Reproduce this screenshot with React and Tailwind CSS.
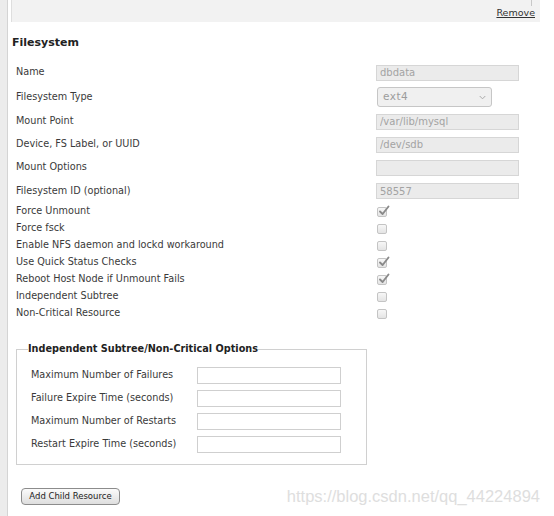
import React from 'react';

// disabled text field, as the cluster form shows them
function RoInput({ value }) {
  return (
    <input
      readOnly
      value={value}
      className="w-[143px] h-[16px] bg-[#ebebeb] border border-[#d6d6d6] px-[3px] text-[10px] leading-[14px] text-[#a3a3a3] outline-none"
    />
  );
}

function Check({ checked }) {
  return (
    <div className="relative w-[10px] h-[10px] rounded-[2px] border border-[#c4c4c4] bg-gradient-to-b from-[#f7f7f7] to-[#e4e4e4]">
      {checked && (
        <svg viewBox="0 0 12 12" className="absolute -top-[3px] left-[0px] w-[12px] h-[12px]">
          <path d="M2 6.5 L4.6 9 L10.5 1.5" fill="none" stroke="#8a8a8a" strokeWidth="1.9" strokeLinecap="round" strokeLinejoin="round" />
        </svg>
      )}
    </div>
  );
}

function Row({ label, h, children }) {
  return (
    <div className={`flex items-center ${h}`}>
      <div className="w-[360px] shrink-0">{label}</div>
      {children}
    </div>
  );
}

const checks = [
  ['Force Unmount', true],
  ['Force fsck', false],
  ['Enable NFS daemon and lockd workaround', false],
  ['Use Quick Status Checks', true],
  ['Reboot Host Node if Unmount Fails', true],
  ['Independent Subtree', false],
  ['Non-Critical Resource', false],
];

const subtreeFields = [
  'Maximum Number of Failures',
  'Failure Expire Time (seconds)',
  'Maximum Number of Restarts',
  'Restart Expire Time (seconds)',
];

export default function App() {
  return (
    <div className="flex w-[554px] min-h-[516px] bg-white font-['DejaVu_Sans',sans-serif] text-[#3a3a3a]">
      <div className="w-[8px] shrink-0 bg-[#ececec] border-r border-[#d4d4d4]" />
      <div className="flex-1 flex flex-col">
        {/* previous resource panel (bottom edge) */}
        <div className="ml-[3px] mr-[14px] h-[22px] bg-[#f2f2f2] border-l border-[#dedede] flex flex-col">
          <div className="h-[6px] mr-[8px] border-r border-[#c8c8c8]" />
          <div className="flex justify-end pr-[5px]">
            <a className="text-[9.5px] leading-[14px] text-[#333] underline cursor-pointer">Remove</a>
          </div>
        </div>

        <div className="h-[39px] pt-[3px] pl-[4px] flex items-center">
          <h2 className="text-[11px] font-bold text-[#222]">Filesystem</h2>
        </div>

        <div className="pl-[8px] text-[9.7px] flex flex-col">
          <Row label="Name" h="h-[23px]">
            <RoInput value="dbdata" />
          </Row>
          <Row label="Filesystem Type" h="h-[26px]">
            <div className="ml-[1px] w-[115px] h-[20px] rounded-[3px] border border-[#c6c6c6] bg-[#f0f0f0] flex items-center justify-between pl-[5px] pr-[5px]">
              <span className="text-[10.5px] tracking-[0.5px] text-[#9c9c9c]">ext4</span>
              <svg viewBox="0 0 8 5" className="w-[7px] h-[5px]">
                <path d="M0.8 0.8 L4 4 L7.2 0.8" fill="none" stroke="#a8a8a8" strokeWidth="1.1" />
              </svg>
            </div>
          </Row>
          <Row label="Mount Point" h="h-[23px]">
            <RoInput value="/var/lib/mysql" />
          </Row>
          <Row label="Device, FS Label, or UUID" h="h-[23px]">
            <RoInput value="/dev/sdb" />
          </Row>
          <Row label="Mount Options" h="h-[23px]">
            <RoInput value="" />
          </Row>
          <Row label="Filesystem ID (optional)" h="h-[24px]">
            <RoInput value="58557" />
          </Row>
          {checks.map(([label, on]) => (
            <Row key={label} label={label} h="h-[17px]">
              <div className="ml-[1px]">
                <Check checked={on} />
              </div>
            </Row>
          ))}

          <fieldset className="mt-[20px] w-[351px] border border-[#d0d0d0] px-[11px] pb-[8px]">
            <legend className="text-[9.7px] leading-[14px] font-bold text-[#222]">
              Independent Subtree/Non-Critical Options
            </legend>
            <div className="mt-[8px] pl-[3px] flex flex-col">
              {subtreeFields.map((f) => (
                <div key={f} className="flex items-center h-[23px]">
                  <div className="w-[166px] shrink-0">{f}</div>
                  <input className="w-[144px] h-[17px] bg-white border border-[#cfcfcf] outline-none" />
                </div>
              ))}
            </div>
          </fieldset>

          <div className="mt-[23px] flex items-center">
            <button className="ml-[5px] w-[99px] h-[17px] rounded-[4px] border border-[#8c8c8c] bg-gradient-to-b from-[#fbfbfb] to-[#dedede] text-[8.5px] text-[#222] leading-none">
              Add Child Resource
            </button>
            <span className="ml-auto mr-[14px] font-['Liberation_Sans',Arial,sans-serif] text-[16.5px] leading-[17px] text-[#dedede]">
              https://blog.csdn.net/qq_44224894
            </span>
          </div>
        </div>
      </div>
    </div>
  );
}
